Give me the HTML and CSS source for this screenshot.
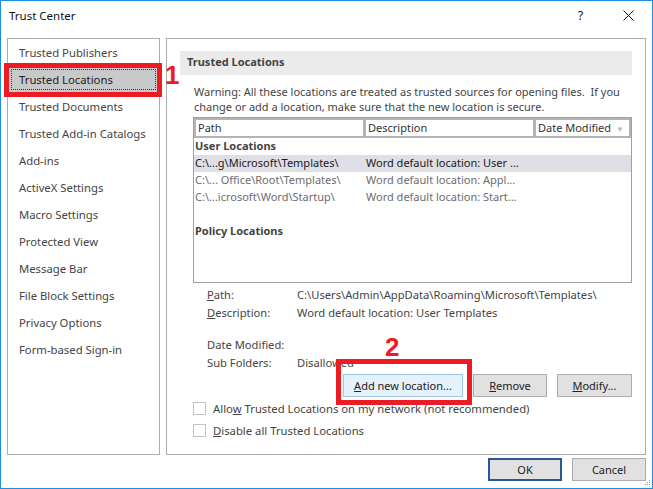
FILE: index.html
```html
<!DOCTYPE html>
<html lang="en">
<head>
    <meta charset="UTF-8">
    <title>Trust Center</title>
    <link rel="stylesheet" href="styles.css">
</head>
<body>

    <div class="window">
        <div class="titlebar">
            <span class="title">Trust Center</span>
            <span class="help">?</span>
            <span class="close">
                <svg width="11" height="11" viewBox="0 0 11 11"><path d="M0.5 0.5 L10.5 10.5 M10.5 0.5 L0.5 10.5" stroke="#111" stroke-width="1" fill="none"/></svg>
            </span>
        </div>

        <div class="main">
            <ul class="nav">
                <li>Trusted Publishers</li>
                <li class="selected">Trusted Locations<span class="mark mark-box"></span><span class="mark-num num-1">1</span></li>
                <li>Trusted Documents</li>
                <li>Trusted Add-in Catalogs</li>
                <li>Add-ins</li>
                <li>ActiveX Settings</li>
                <li>Macro Settings</li>
                <li>Protected View</li>
                <li>Message Bar</li>
                <li>File Block Settings</li>
                <li>Privacy Options</li>
                <li>Form-based Sign-in</li>
            </ul>

            <div class="content">
                <div class="section-head">Trusted Locations</div>
                <div class="section-body">
                    <p class="warning">Warning: All these locations are treated as trusted sources for opening files.&nbsp; If you change or add a location, make sure that the new location is secure.</p>

                    <div class="locations">
                        <div class="loc-head">
                            <div class="col-head col-path">Path</div>
                            <div class="col-head col-desc">Description</div>
                            <div class="col-head col-date">Date Modified <span class="sort">&#9660;</span></div>
                        </div>
                        <div class="group">User Locations</div>
                        <div class="loc-row active">
                            <span class="c-path">C:\...g\Microsoft\Templates\</span>
                            <span class="c-desc">Word default location: User ...</span>
                        </div>
                        <div class="loc-row">
                            <span class="c-path">C:\... Office\Root\Templates\</span>
                            <span class="c-desc">Word default location: Appl...</span>
                        </div>
                        <div class="loc-row">
                            <span class="c-path">C:\...icrosoft\Word\Startup\</span>
                            <span class="c-desc">Word default location: Start...</span>
                        </div>
                        <div class="loc-row"></div>
                        <div class="group">Policy Locations</div>
                    </div>

                    <div class="details">
                        <div class="detail"><span class="label"><u>P</u>ath:</span><span>C:\Users\Admin\AppData\Roaming\Microsoft\Templates\</span></div>
                        <div class="detail"><span class="label"><u>D</u>escription:</span><span>Word default location: User Templates</span></div>
                        <div class="detail gap"><span class="label">Date Modified:</span><span></span></div>
                        <div class="detail"><span class="label">Sub Folders:</span><span>Disallowed</span></div>
                    </div>

                    <div class="actions">
                        <span class="marked">
                            <button class="btn btn-focus btn-add"><u>A</u>dd new location...</button>
                            <span class="mark mark-add"></span>
                            <span class="mark-num num-2">2</span>
                        </span>
                        <button class="btn btn-remove"><u>R</u>emove</button>
                        <button class="btn btn-modify"><u>M</u>odify...</button>
                    </div>

                    <label class="check"><span class="box"></span><span>Allo<u>w</u> Trusted Locations on my network (not recommended)</span></label>
                    <label class="check"><span class="box"></span><span><u>D</u>isable all Trusted Locations</span></label>
                </div>
            </div>
        </div>

        <div class="footer">
            <button class="btn btn-ok">OK</button>
            <button class="btn">Cancel</button>
            <svg class="grip" width="7" height="7" viewBox="0 0 7 7">
                <rect x="5" y="0" width="1" height="1" fill="#999"/>
                <rect x="3" y="2" width="1" height="1" fill="#999"/>
                <rect x="5" y="2" width="1" height="1" fill="#999"/>
                <rect x="1" y="4" width="1" height="1" fill="#999"/>
                <rect x="3" y="4" width="1" height="1" fill="#999"/>
                <rect x="5" y="4" width="1" height="1" fill="#999"/>
            </svg>
        </div>
    </div>

</body>
</html>
```

FILE: styles.css
```css
* { margin: 0; padding: 0; box-sizing: border-box; }
body {
    font-family: "Segoe UI", "Noto Sans", sans-serif;
    font-size: 11px;
    color: #444;
    background: white;
}
.window {
    width: 653px;
    height: 489px;
    border: 1px solid #1a8fe3;
    background: white;
    display: flex;
    flex-direction: column;
}

/* title bar */
.titlebar {
    height: 37px;
    display: flex;
    align-items: center;
    padding: 0 0 9px 8px;
    color: #111;
}
.title { flex: 1; font-size: 11.5px; }
.help { width: 44px; font-size: 12px; }
.close { width: 30px; display: flex; align-items: center; padding-left: 1px; }

.main {
    height: 417px;
    display: flex;
    gap: 6px;
    padding: 0 6px;
}

/* left navigation */
.nav {
    width: 153px;
    border: 1px solid #adadad;
    list-style: none;
}
.nav li {
    height: 27px;
    line-height: 27px;
    padding-left: 11px;
    position: relative;
    font-size: 11.3px;
}
.nav li.selected {
    background: #c9c9c9;
    color: #222;
    outline: 1px dotted #333;
    outline-offset: -4px;
}

/* red annotations */
.mark {
    position: absolute;
    border: 5px solid #ed1c24;
}
.mark-box { left: -4px; right: -3px; top: -3px; bottom: -4px; }
.mark-num {
    position: absolute;
    font-family: "Liberation Sans", Arial, sans-serif;
    font-weight: bold;
    font-size: 26px;
    line-height: 26px;
    color: #ed1c24;
}
.num-1 { left: 157px; top: -4px; }
.marked { position: relative; display: flex; }
.mark-add { left: -7px; right: -9px; top: -15px; bottom: -8px; }
.num-2 { left: 42px; top: -40px; }

/* right content */
.content {
    flex: 1;
    border: 1px solid #adadad;
    padding: 12px 13px 0;
}
.section-head {
    height: 24px;
    line-height: 22px;
    background: #ebebeb;
    padding-left: 7px;
    font-weight: bold;
}
.section-body { padding-left: 13px; }
.warning {
    margin-top: 9px;
    padding-left: 1px;
    line-height: 15px;
}

.locations {
    margin-top: 3px;
    height: 166px;
    border: 1px solid #a0a0a0;
}
.loc-head {
    display: flex;
    gap: 3px;
    background: #b4b4b4;
    padding: 2px;
    height: 20px;
}
.col-head {
    background: white;
    line-height: 15px;
    padding-left: 2px;
    color: #333;
}
.col-path, .col-desc { width: 167px; }
.col-date { flex: 1; }
.sort { color: #bbb; font-size: 8px; margin-left: 2px; }

.group {
    height: 17px;
    line-height: 15px;
    padding-left: 1px;
    font-weight: bold;
}
.loc-row {
    height: 17px;
    line-height: 16px;
    display: flex;
    color: #6d6d6d;
}
.loc-row.active { background: #dfdfe5; color: #1a1a1a; }
.c-path { width: 172px; padding-left: 1px; }

.details { margin-top: 3px; padding-left: 14px; }
.detail { height: 18px; line-height: 18px; display: flex; font-size: 11.2px; }
.detail.gap { margin-top: 14px; }
.label { width: 90px; }

.actions {
    display: flex;
    justify-content: flex-end;
    gap: 10px;
    margin-top: 2px;
}
.btn {
    height: 23px;
    background: #e1e1e1;
    border: 1px solid #adadad;
    font-family: "Segoe UI", "Noto Sans", sans-serif;
    font-size: 11px;
    color: #222;
}
.btn-add { width: 120px; }
.btn-focus { background: #e5f1fb; border-color: #9ec5ea; }
.btn-remove { width: 74px; }
.btn-modify { width: 75px; }

.check {
    display: flex;
    align-items: center;
    height: 22px;
    gap: 7px;
    font-size: 11.3px;
}
.box {
    width: 13px;
    height: 13px;
    border: 1px solid #c3c3c3;
    background: white;
}

/* footer */
.footer {
    flex: 1;
    display: flex;
    justify-content: flex-end;
    align-items: flex-start;
    gap: 10px;
    padding: 3px 6px 0 0;
    position: relative;
}
.footer .btn { width: 74px; }
.btn-ok { border: 2px solid #2b5797; }
.grip { position: absolute; right: 1px; bottom: 1px; }
```
